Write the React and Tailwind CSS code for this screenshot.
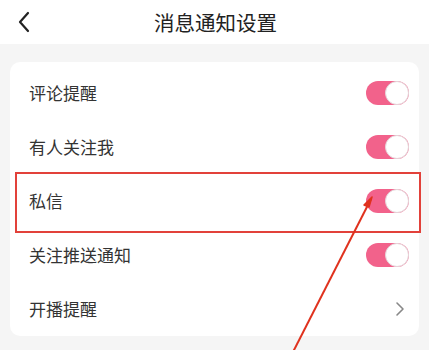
import React from 'react';

const rows = [
  { label: '评论提醒', toggle: true },
  { label: '有人关注我', toggle: true },
  { label: '私信', toggle: true },
  { label: '关注推送通知', toggle: true },
  { label: '开播提醒', toggle: false },
];

const Toggle = () => (
  <div className="w-[43px] h-[24px] rounded-full bg-[#f2628b] flex items-center justify-end">
    <div className="w-[24px] h-[24px] rounded-full bg-white border border-[#e4d6da]" />
  </div>
);

const App = () => {
  return (
    <div
      className="relative w-full h-[350px] overflow-hidden bg-[#f5f5f5]"
      style={{ fontFamily: '"Noto Sans CJK SC", "Noto Sans", sans-serif' }}
    >
      <div className="relative h-[44px] bg-white flex items-center justify-center">
        <svg className="absolute left-[16px] top-[11px]" width="16" height="22" viewBox="0 0 16 22" fill="none">
          <path d="M12 2 L4 11 L12 20" stroke="#222" strokeWidth="2.2" strokeLinecap="round" strokeLinejoin="round" />
        </svg>
        <h1 className="text-[20.5px] text-[#222] leading-none pl-[2px]">消息通知设置</h1>
      </div>

      <div className="px-[10px] pt-[18px]">
        <div className="bg-white rounded-[10px] pt-[4px]">
          {rows.map(r => (
            <div key={r.label} className="h-[54px] flex items-center justify-between pl-[19px] pr-[10px]">
              <span className="text-[17px] text-[#333]">{r.label}</span>
              {r.toggle ? (
                <Toggle />
              ) : (
                <svg className="mr-[4px]" width="10" height="16" viewBox="0 0 10 16" fill="none">
                  <path d="M2 2 L8 8 L2 14" stroke="#888" strokeWidth="1.6" strokeLinecap="round" strokeLinejoin="round" />
                </svg>
              )}
            </div>
          ))}
        </div>
      </div>

      {/* annotation */}
      <div className="absolute left-[15px] top-[172px] w-[406px] h-[61px] border-2 border-[#e2413a]" />
      <svg className="absolute left-0 top-0 pointer-events-none" width="429" height="350" viewBox="0 0 429 350">
        <line x1="293" y1="352" x2="371" y2="199" stroke="#e0321e" strokeWidth="2" />
        <path d="M372 197 L364 205 L369 207 Z" fill="#e0321e" stroke="#e0321e" strokeWidth="1.5" strokeLinejoin="round" />
      </svg>
    </div>
  );
};

export default App;
